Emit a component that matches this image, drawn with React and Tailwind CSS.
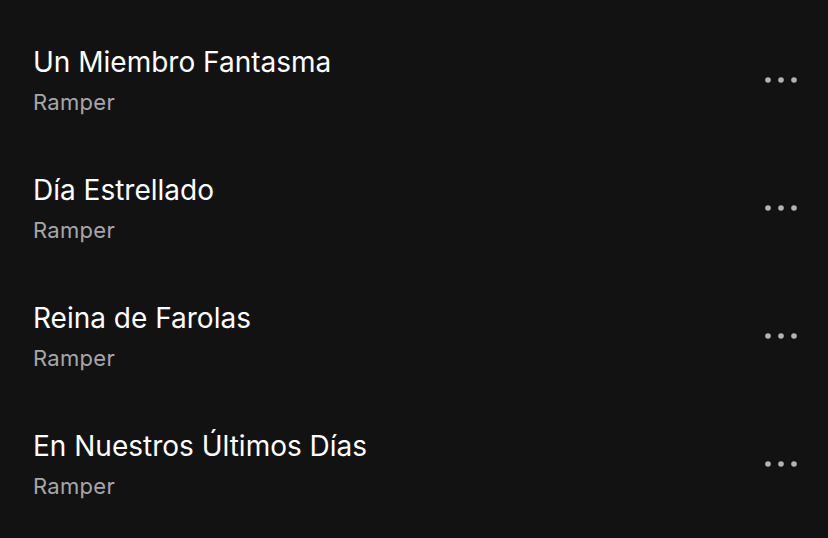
const tracks = [
  { title: 'Un Miembro Fantasma', artist: 'Ramper' },
  { title: 'Día Estrellado', artist: 'Ramper' },
  { title: 'Reina de Farolas', artist: 'Ramper' },
  { title: 'En Nuestros Últimos Días', artist: 'Ramper' },
]

const Dots = () => (
  <svg width="34" height="8" viewBox="0 0 34 8" className="text-[#b3b3b3]">
    <circle cx="4" cy="4" r="2.8" fill="currentColor" />
    <circle cx="17" cy="4" r="2.8" fill="currentColor" />
    <circle cx="30" cy="4" r="2.8" fill="currentColor" />
  </svg>
)

export default function App() {
  return (
    <div className="w-[828px] h-[538px] bg-[#121212] overflow-hidden pt-4 font-['Inter',sans-serif]">
      {tracks.map((track, i) => (
        <div key={i} className="h-[128px] flex items-center justify-between pl-[33px] pr-[30px]">
          <div className="flex flex-col gap-2">
            <span className="text-[28px] leading-[36px] text-white">{track.title}</span>
            <span className="text-[22px] leading-[28px] tracking-[0.3px] text-[#a7a7a7]">{track.artist}</span>
          </div>
          <Dots />
        </div>
      ))}
    </div>
  )
}
